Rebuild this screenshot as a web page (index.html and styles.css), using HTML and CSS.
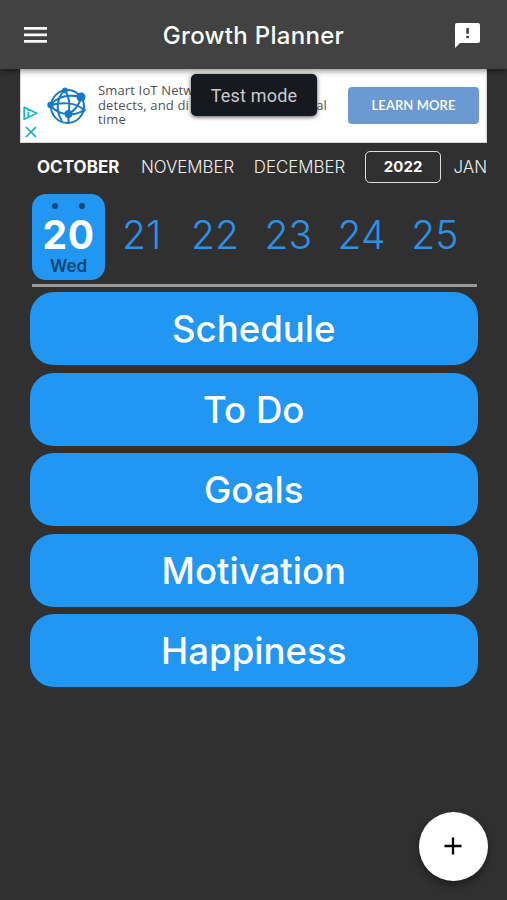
FILE: index.html
```html
<!DOCTYPE html>
<html lang="en">
<head>
<meta charset="utf-8">
<title>Growth Planner</title>
<link rel="stylesheet" href="styles.css">
</head>
<body>
<header class="bar">
  <svg class="menu" viewBox="0 0 23 16"><path d="M0 1.4h23M0 7.9h23M0 14.4h23" stroke="#f8f8f8" stroke-width="2.6"/></svg>
  <h1 class="title">Growth Planner</h1>
  <svg class="feedback" viewBox="0 0 25 25"><path fill="#fff" d="M2 0h21a2 2 0 0 1 2 2v16a2 2 0 0 1-2 2H5l-5 5V2a2 2 0 0 1 2-2z"/><path fill="#424242" d="M11.300 5h2.600v5.700h-2.600zM11.300 12.700h2.600v2.600h-2.600z"/></svg>
</header>
<main class="page">
  <section class="ad">
    <div class="choices">
      <svg class="play" viewBox="0 0 15 15"><path d="M1.200 1.300v12l12.500-6zM5.300 6v5M5.300 4v1" fill="none" stroke="#12b5c9" stroke-width="1.700" stroke-linejoin="round"/></svg>
      <svg class="close" viewBox="0 0 12 12"><path d="M1 1l10 10M11 1L1 11" stroke="#12a9c4" stroke-width="1.700"/></svg>
    </div>
    <svg class="globe" viewBox="0 0 40 38">
      <g fill="none" stroke="#1479c8" stroke-width="2">
        <circle cx="20.500" cy="19.500" r="16.500"/>
        <path d="M3.500 18C10 10 21 7 34 10M18 3.300C10 10 8 23 15 34M18 3.300c5 7 5 15 3.500 23.700M3.500 18c4 6 10 9 18 9 7-4 11-9 12.500-17M3.500 18c11-3 25-3 33.500 5M21.500 27c6 1 11-1 15.500-4M21.500 27v8"/>
      </g>
      <g fill="#1479c8"><circle cx="18" cy="3.300" r="2.900"/><circle cx="34" cy="10" r="4.500"/><circle cx="3.500" cy="18" r="3.200"/><circle cx="21.500" cy="27" r="3.900"/><circle cx="37" cy="23" r="1.800"/></g>
    </svg>
    <div class="copy">
      <div><span class="line1">Smart IoT Netw</span></div>
      <div class="split"><span class="line2">detects, and di</span><span>al</span></div>
      <div><span class="line3">time</span></div>
    </div>
    <div class="cta"><span>LEARN MORE</span></div>
    <div class="toast"><span>Test mode</span></div>
  </section>
  <nav class="months">
    <span class="m-oct">OCTOBER</span><span class="m-nov">NOVEMBER</span><span class="m-dec">DECEMBER</span><span class="year"><b>2022</b></span><span class="m-jan">JAN</span>
  </nav>
  <div class="days">
    <div class="today"><div class="dots"><i></i><i></i></div><b class="num">20</b><span class="wed">Wed</span></div>
    <span class="day">21</span><span class="day">22</span><span class="day">23</span><span class="day">24</span><span class="day">25</span><span class="day next">26</span>
  </div>
  <div class="rule"></div>
  <div class="list">
    <div class="item"><span>Schedule</span></div>
    <div class="item"><span>To Do</span></div>
    <div class="item"><span>Goals</span></div>
    <div class="item"><span>Motivation</span></div>
    <div class="item"><span>Happiness</span></div>
  </div>
</main>
<div class="fab"><svg viewBox="0 0 18 18"><path d="M9 0.500v17M0.500 9h17" stroke="#000" stroke-width="2.300"/></svg></div>
</body>
</html>
```
FILE: styles.css
```css
* { box-sizing: border-box; }
body { margin: 0; width: 507px; height: 900px; overflow: hidden; background: #303030; color: #fff; font-family: Inter, "Liberation Sans", sans-serif; position: relative; }
.bar { position: relative; z-index: 2; height: 69px; background: #424242; box-shadow: 0 2px 6px rgba(0,0,0,.45); display: flex; align-items: center; padding: 1px 27px 0 24px; }
.menu { width: 23px; height: 16px; }
.title { flex: 1; margin: 2px 0 0 5px; font-size: 24px; font-weight: 500; line-height: 30px; letter-spacing: .3px; text-align: center; }
.feedback { width: 25px; height: 25px; }
.page { padding: 0 20px; }
.ad { position: relative; height: 74px; background: #fff; border: 1px solid #d8d8d8; border-top: 0; display: flex; color: #505257; }
.choices { width: 26px; padding: 37px 0 0 2px; display: flex; flex-direction: column; gap: 5px; }
.play { width: 15px; height: 15px; }
.close { width: 12px; height: 12px; margin-left: 2px; }
.globe { width: 40px; height: 38px; margin-top: 18px; }
.copy { width: 229px; margin: 14px 0 0 11px; font-family: "Open Sans", sans-serif; font-size: 13px; line-height: 14.700px; letter-spacing: .15px; white-space: nowrap; }
.split { display: flex; justify-content: space-between; }
.cta { width: 131px; height: 37px; margin: 18px 0 0 21px; border-radius: 4px; background: #6c99d1; color: #fff; font: 600 13px/36px Lato, sans-serif; letter-spacing: .1px; text-align: center; white-space: nowrap; }
.toast { position: absolute; left: 170px; top: 5px; width: 126px; height: 42px; border-radius: 5px; background: #16191e; box-shadow: 0 1px 4px rgba(0,0,0,.7); color: #c9cacc; font: 18px/43px Roboto, sans-serif; letter-spacing: .2px; text-align: center; }
.months { height: 48px; padding-left: 17px; display: flex; align-items: center; overflow: hidden; white-space: nowrap; font-size: 16.900px; font-weight: 300; color: #eee; }
.m-oct { width: 104px; font-weight: 700; letter-spacing: .1px; color: #fff; }
.m-nov { width: 113px; }
.m-dec { width: 111px; }
.year { width: 76px; height: 32px; margin-left: 0.500px; border: 1.500px solid #ddd; border-radius: 5px; font-size: 15px; line-height: 30px; text-align: center; color: #fff; }
.year b { font-weight: 700; letter-spacing: .1px; }
.m-jan { margin-left: 12.500px; }
.days { height: 93px; padding: 3px 0 0 12px; display: flex; overflow: hidden; }
.today { flex: none; width: 73px; height: 86px; border-radius: 14px; background: #2196f3; display: flex; flex-direction: column; align-items: center; }
.dots { width: 33px; margin-top: 9px; display: flex; justify-content: space-between; }
.dots i { width: 6px; height: 6px; border-radius: 50%; background: #0d4777; }
.num { font-size: 39px; line-height: 44px; letter-spacing: .5px; margin-top: 4px; }
.wed { font-size: 17px; font-weight: 600; line-height: 18px; margin-top: 0; color: #0d4777; }
.day { flex: none; width: 73.300px; height: 82px; font-size: 39px; font-weight: 300; line-height: 82px; text-align: center; color: #2b92e8; }
.next { color: #33414c; text-indent: -1px; }
.rule { width: 445px; height: 3px; margin-left: 12px; background: #9a9896; }
.list { padding: 5px 9.500px 0 10px; display: flex; flex-direction: column; gap: 7.600px; }
.item { height: 73px; border-radius: 24px; background: #2196f3; font-size: 36.600px; font-weight: 500; line-height: 74px; text-align: center; }
.fab { position: absolute; left: 418.500px; top: 811.500px; width: 69px; height: 69px; border-radius: 50%; background: #fff; box-shadow: 0 4px 9px rgba(0,0,0,.4); display: flex; align-items: center; justify-content: center; }
.fab svg { width: 18px; height: 18px; }
```
